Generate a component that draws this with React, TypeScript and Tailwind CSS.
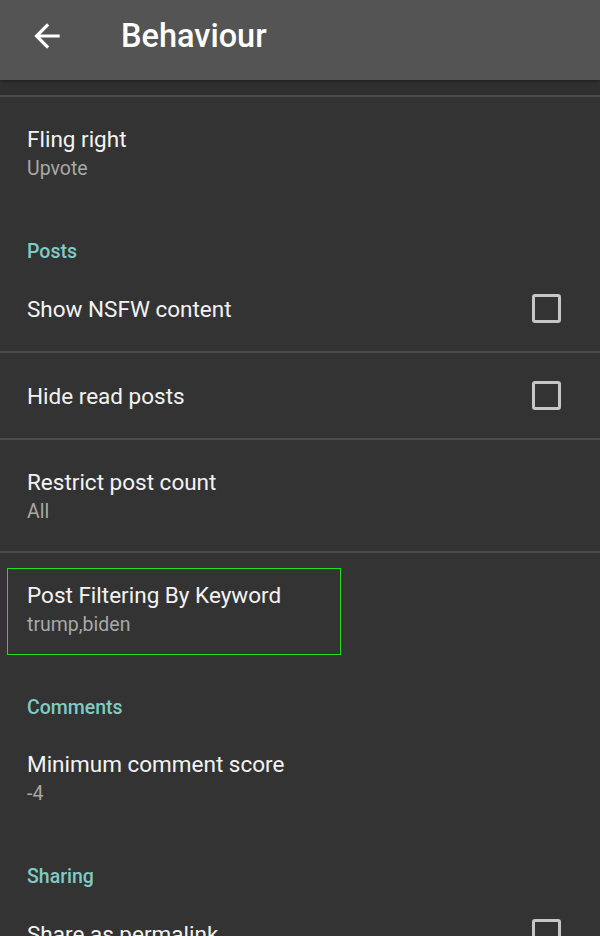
import React from 'react';

type Row = { title: string; summary?: string; checkbox?: boolean; highlight?: boolean };

const Checkbox = () => (
  <div className="w-[29px] h-[29px] rounded-[3px] border-[3px] border-[#c6c6c6] shrink-0" />
);

const PrefRow = ({ title, summary, checkbox, highlight }: Row) => {
  const tall = !!summary;
  return (
    <div className={`relative flex items-center justify-between pl-[27px] pr-[39px] ${tall ? 'h-[111px]' : 'h-[85px]'}`}>
      {highlight && (
        <div className="absolute left-[7px] top-[15px] w-[334px] h-[87px] border border-[#22dd22] pointer-events-none" />
      )}
      <div className="flex flex-col">
        <span className="text-[22.5px] leading-[28px] text-[#f3f3f3]">{title}</span>
        {summary && <span className="text-[19.5px] leading-[24px] text-[#a8a8a8] mt-[4px]">{summary}</span>}
      </div>
      {checkbox && <Checkbox />}
    </div>
  );
};

const Category = ({ label }: { label: string }) => (
  <div className="h-[58px] flex items-end pl-[27px] pb-[2px]">
    <span className="text-[19.5px] leading-[24px] font-medium text-[#80cbc4]">{label}</span>
  </div>
);

const Divider = () => <div className="h-[2px] bg-[#4a4a4a]" />;

export default function App() {
  return (
    <div className="w-[600px] h-[936px] overflow-hidden bg-[#333333]" style={{ fontFamily: 'Roboto, "Liberation Sans", sans-serif' }}>
      {/* Toolbar */}
      <div className="h-[80px] bg-[#545454] flex items-center pb-[8px] shadow-[0_1px_3px_rgba(0,0,0,0.4)] relative z-10">
        <svg className="ml-[28px] w-[38px] h-[38px]" viewBox="0 0 24 24" fill="#ffffff">
          <path d="M20 11H7.83l5.59-5.59L12 4l-8 8 8 8 1.41-1.41L7.83 13H20v-2z" />
        </svg>
        <span className="ml-[55px] text-[32.5px] font-medium text-white">Behaviour</span>
      </div>

      {/* tail of the row above */}
      <div className="h-[15px] bg-[#2f2f2f]" />
      <Divider />

      <PrefRow title="Fling right" summary="Upvote" />

      <Category label="Posts" />
      <PrefRow title="Show NSFW content" checkbox />
      <Divider />
      <PrefRow title="Hide read posts" checkbox />
      <Divider />
      <PrefRow title="Restrict post count" summary="All" />
      <Divider />
      <PrefRow title="Post Filtering By Keyword" summary="trump,biden" highlight />

      <Category label="Comments" />
      <PrefRow title="Minimum comment score" summary="-4" />

      <Category label="Sharing" />
      <PrefRow title="Share as permalink" checkbox />
    </div>
  );
}
